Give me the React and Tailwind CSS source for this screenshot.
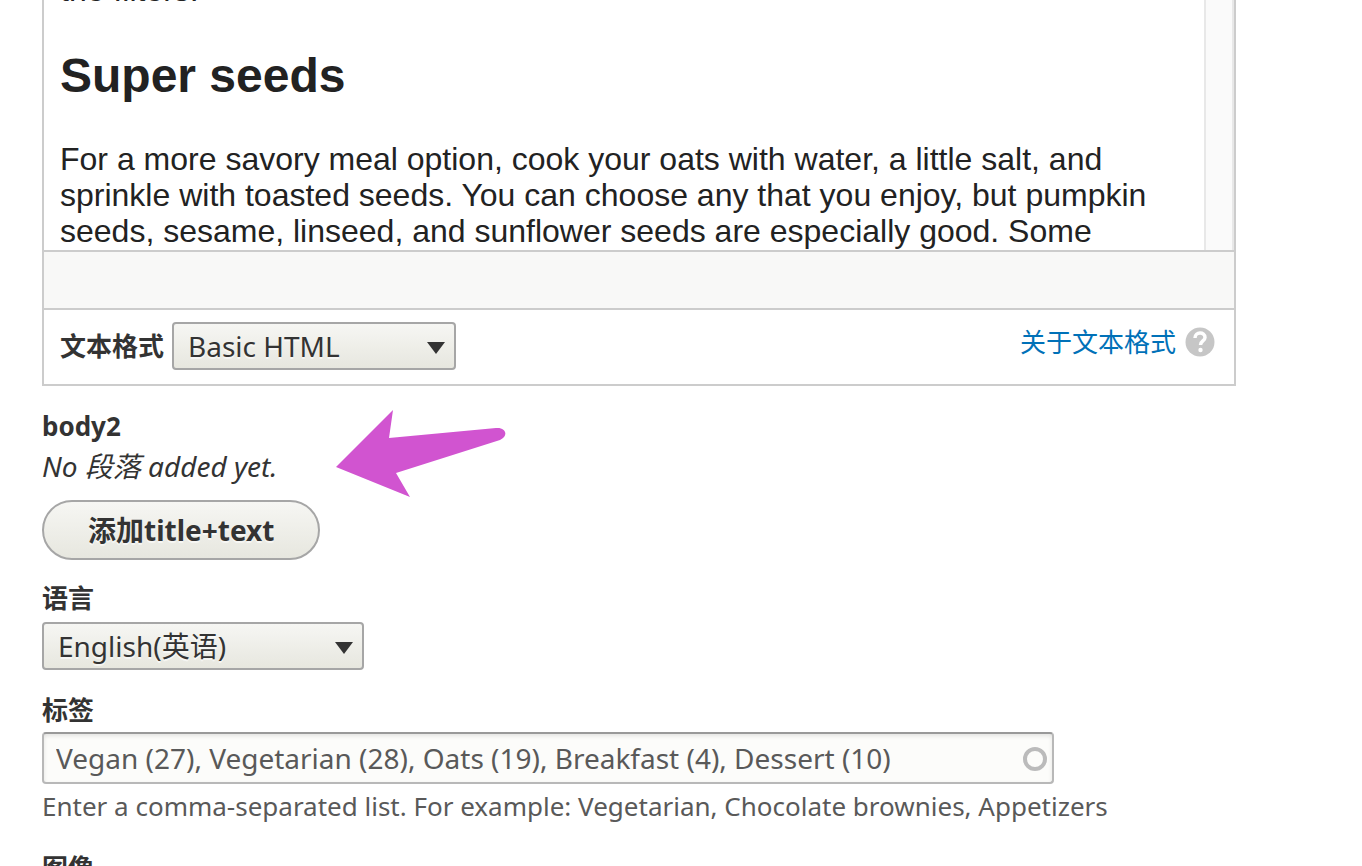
const selectStyle =
  "h-12 w-full appearance-none rounded-[4px] border-2 border-[#a6a6a6] bg-linear-to-b from-[#f6f6f3] to-[#e7e7df] pl-[14px] pr-12 text-[28px] leading-10 text-[#333] [text-shadow:0_2px_rgba(255,255,255,0.6)]"

const labelStyle = "text-[26px] leading-8 font-bold text-[#333]"

const Arrow = () => (
  <svg
    className="pointer-events-none absolute right-[10px] top-5 h-3 w-5"
    viewBox="0 0 20 12"
    aria-hidden="true"
  >
    <path d="M1 0H19L10 12Z" fill="#333" />
  </svg>
)

const Select = ({ id, value, width }) => (
  <div className={`relative ${width}`}>
    <select id={id} className={selectStyle} defaultValue={value}>
      <option>{value}</option>
    </select>
    <Arrow />
  </div>
)

const Editor = () => {
  return (
    <section className="border-2 border-t-0 border-[#ccc]">
      {/* scrolled to the end of the visible text */}
      <div className="flex h-[250px] overflow-hidden">
        <div className="flex flex-1 flex-col justify-end pr-10 pb-px pl-4 font-['Liberation_Sans',sans-serif] text-[#222]">
          <p className="text-[32px] leading-9">the filters.</p>
          <h2 className="mt-[41px] mb-[38px] text-[48px] leading-[54px] font-bold">Super seeds</h2>
          <p className="text-[32px] leading-9">
            For a more savory meal option, cook your oats with water, a little salt, and sprinkle
            with toasted seeds. You can choose any that you enjoy, but pumpkin seeds, sesame,
            linseed, and sunflower seeds are especially good. Some
          </p>
        </div>
        <div className="w-[30px] shrink-0 border-x-2 border-[#e8e8e8] bg-[#fafafa]" />
      </div>
      <div className="h-[60px] border-y-2 border-[#ccc] bg-[#f8f8f7]" />
      <div className="flex items-start justify-between pt-3 pr-[18px] pb-[14px] pl-4">
        <div className="flex items-center gap-2">
          <label htmlFor="format" className={labelStyle}>
            文本格式
          </label>
          <Select id="format" value="Basic HTML" width="w-[284px]" />
        </div>
        <a href="#formats" className="flex items-center gap-2 pt-1 text-[26px] leading-8 text-[#0071b8]">
          关于文本格式
          <svg className="h-8 w-8" viewBox="0 0 32 32" aria-hidden="true">
            <circle cx="16" cy="16" r="14.500" fill="#c6c6c6" />
            <path
              d="M11 12C11 5.500 21 5.500 21 11.500C21 15 16.500 15 16.500 19"
              fill="none"
              stroke="#fff"
              strokeWidth="3.500"
            />
            <circle cx="16.500" cy="24" r="2.200" fill="#fff" />
          </svg>
        </a>
      </div>
    </section>
  )
}

const Paragraphs = () => {
  return (
    <section className="relative mt-6 text-[#333]">
      <h3 className={labelStyle}>body2</h3>
      <p className="mt-2 text-[28px] leading-8 italic">No 段落 added yet.</p>
      <button
        type="button"
        className="mt-[18px] h-[60px] rounded-full border-2 border-[#a6a6a6] bg-linear-to-b from-[#f6f6f3] to-[#e7e7df] px-11 text-[28px] leading-8 font-bold [text-shadow:0_2px_rgba(255,255,255,0.6)]"
      >
        添加title+text
      </button>
      <svg
        className="absolute left-[294px] top-0 h-[88px] w-[172px]"
        viewBox="0 0 172 88"
        aria-hidden="true"
      >
        <path
          d="M0 57L57 0L53 28L160 18C170 17 173 26 164 30L60 63L74 87Z"
          fill="#d154d0"
        />
      </svg>
    </section>
  )
}

const Tags = () => {
  return (
    <div className="mt-6 flex flex-col">
      <label htmlFor="tags" className={labelStyle}>
        标签
      </label>
      <div className="relative mt-[6px] max-w-[1012px]">
        <input
          id="tags"
          type="text"
          defaultValue="Vegan (27), Vegetarian (28), Oats (19), Breakfast (4), Dessert (10)"
          className="h-[52px] w-full rounded-[4px] border-2 border-[#b8b8b8] border-t-[#999] bg-[#fcfcfa] pl-3 pr-12 text-[28px] leading-8 text-[#595959] shadow-[inset_0_2px_4px_rgba(0,0,0,0.1)]"
        />
        <span className="absolute right-[7px] top-[15px] h-6 w-6 rounded-full border-4 border-[#bbb]" />
      </div>
      <p className="mt-[6px] text-[26px] leading-8 text-[#595959]">
        Enter a comma-separated list. For example: Vegetarian, Chocolate brownies, Appetizers
      </p>
    </div>
  )
}

export default function App() {
  return (
    <main className="h-screen overflow-hidden bg-white pl-[42px] pr-[126px] font-['Noto_Sans','Noto_Sans_CJK_SC',sans-serif]">
      <Editor />
      <Paragraphs />
      <div className="mt-[22px] flex flex-col gap-2">
        <label htmlFor="language" className={labelStyle}>
          语言
        </label>
        <Select id="language" value="English(英语)" width="w-[322px]" />
      </div>
      <Tags />
      <h3 className={`mt-[30px] ${labelStyle}`}>图像</h3>
    </main>
  )
}
